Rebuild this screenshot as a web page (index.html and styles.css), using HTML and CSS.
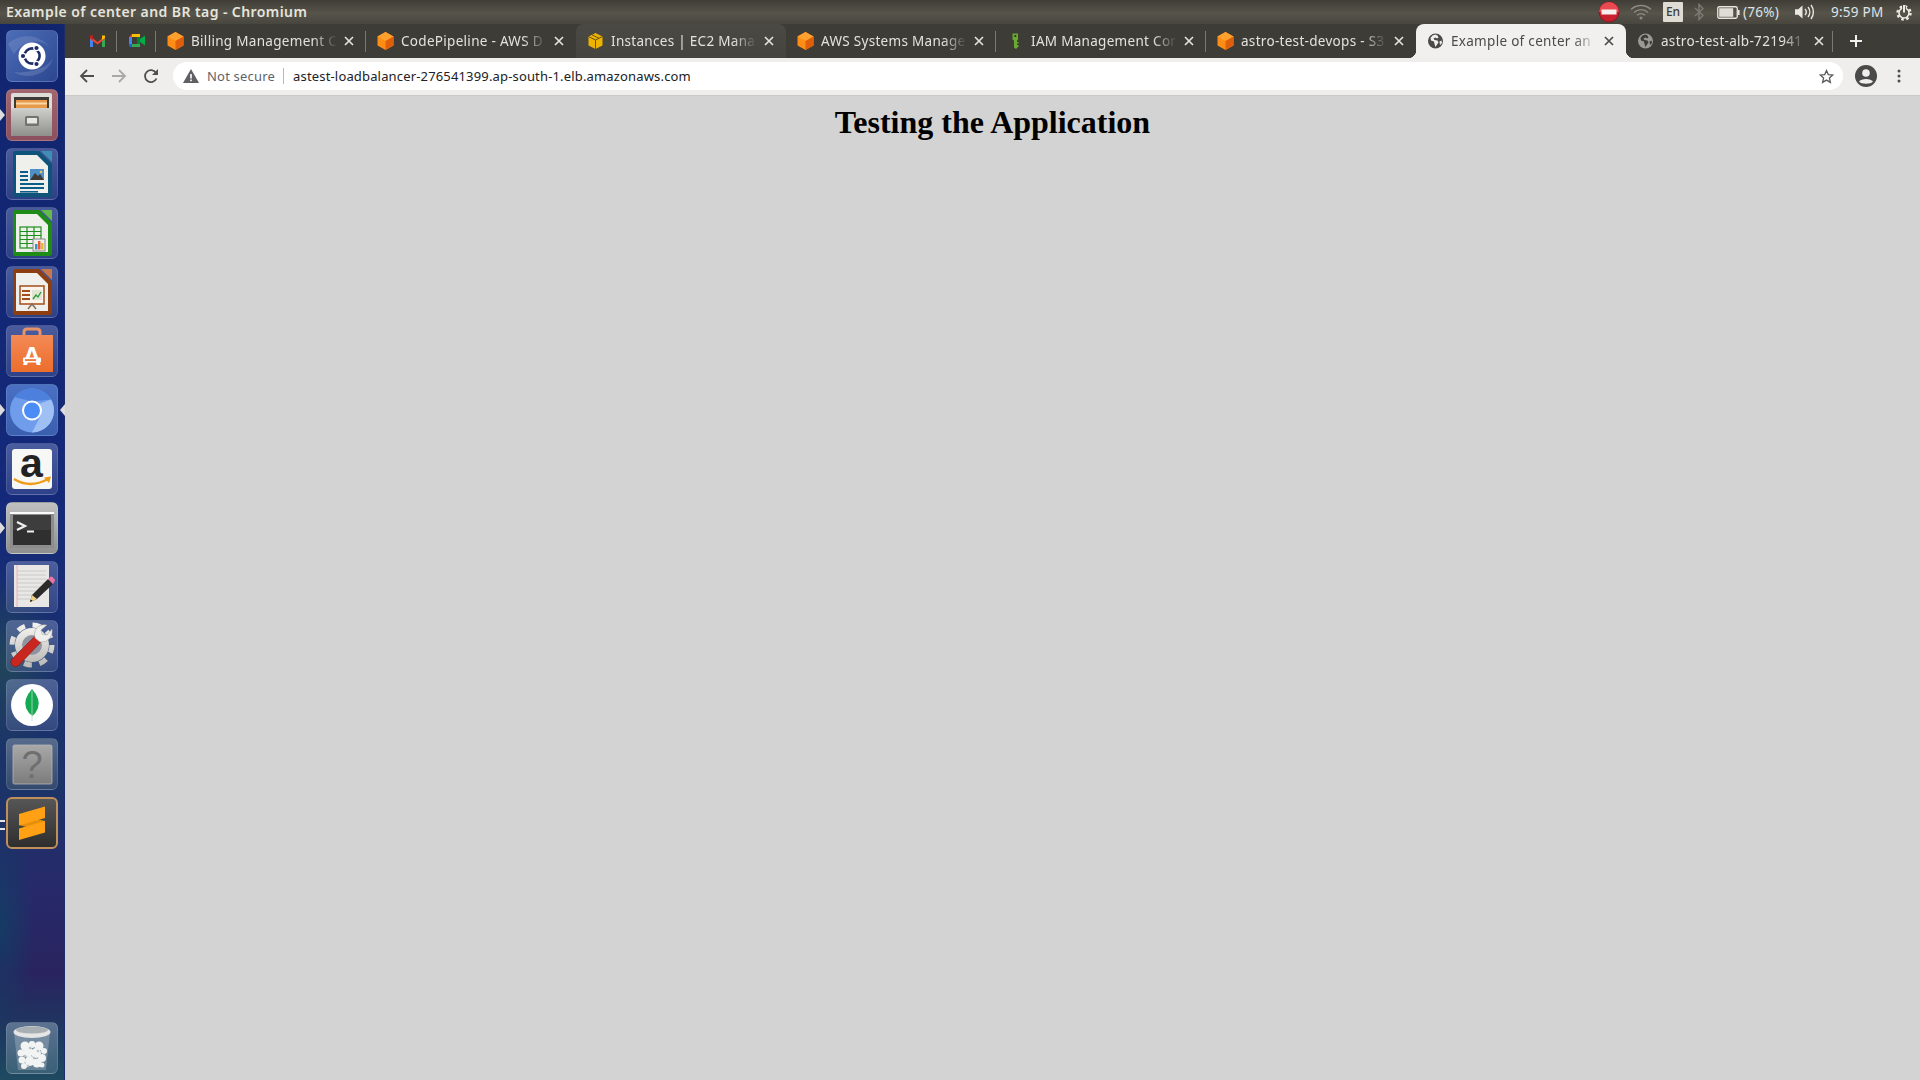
FILE: index.html
```html
<!DOCTYPE html>
<html lang="en">
<head>
<meta charset="utf-8">
<title>Example of center and BR tag - Chromium</title>
<link rel="stylesheet" href="styles.css">
</head>
<body>
<svg class="defs" width="0" height="0" aria-hidden="true">
  <symbol id="cube" viewBox="0 0 16 18">
    <path d="M8 0 16 4.500V13.500L8 18 0 13.500V4.500Z" fill="#ff8c14"/>
    <path d="M8 0 16 4.500 8 9 0 4.500Z" fill="#ffa02e"/>
    <path d="M8 9 16 4.500V13.500L8 18Z" fill="#dd5f0c"/>
  </symbol>
  <symbol id="globe" viewBox="0 0 16 16">
    <circle cx="8" cy="8" r="7.500" fill="currentColor"/>
    <path d="M8 1.500 5 2.500 3 5l.5 2.500L6.500 8.500 7 11l1 3 1.500-2.500 1.500-2-1-2L7 7 6 5.500 8 4.500 9.500 5.500 11 4.500 10 2.500Z" fill="var(--globe-land)"/>
    <path d="M12 8.500 14 7.500 14.500 10 12.500 12Z" fill="var(--globe-land)"/>
  </symbol>
  <symbol id="close" viewBox="0 0 10 10">
    <path d="M1 1 9 9M9 1 1 9" fill="none" stroke="currentColor" stroke-width="1.700"/>
  </symbol>
  <linearGradient id="cab" x1="0" y1="0" x2="0" y2="1"><stop offset="0" stop-color="#cfcfcb"/><stop offset="1" stop-color="#8f8f8b"/></linearGradient>
  <linearGradient id="bag" x1="0" y1="0" x2="0" y2="1"><stop offset="0" stop-color="#f48a56"/><stop offset="1" stop-color="#ec6d2c"/></linearGradient>
  <linearGradient id="unk" x1="0" y1="0" x2="0" y2="1"><stop offset="0" stop-color="#a8a8a8"/><stop offset="1" stop-color="#7c7c7c"/></linearGradient>
  <linearGradient id="gear" x1="0" y1="0" x2="0" y2="1"><stop offset="0" stop-color="#f0efec"/><stop offset="1" stop-color="#bdbcb8"/></linearGradient>
</svg>

<header class="topbar">
  <div class="win-title">Example of center and BR tag - Chromium</div>
  <div class="indicators">
    <svg class="ind-stop" width="22" height="22" viewBox="0 0 22 22"><circle cx="11" cy="11" r="10" fill="#c9202f" stroke="#8e1520"/><path d="M11 1a10 10 0 0 1 10 10H1A10 10 0 0 1 11 1Z" fill="#e84a4f"/><rect x="3.500" y="8.500" width="15" height="5" fill="#f5f0ee"/></svg>
    <svg class="ind-wifi" width="22" height="16" viewBox="0 0 22 16"><g fill="none" stroke="#8b8a82" stroke-width="1.400"><path d="M1 5.500a14.500 14.500 0 0 1 20 0"/><path d="M4 8.500a10 10 0 0 1 14 0"/><path d="M7 11.300a6 6 0 0 1 8 0"/></g><circle cx="11" cy="14" r="1.500" fill="#8b8a82"/></svg>
    <span class="ind-en">En</span>
    <svg class="ind-bt" width="10" height="18" viewBox="0 0 10 18"><path d="M1 5 9 12.500 5 16.500V1.500L9 5.500 1 13" fill="none" stroke="#7d7c74" stroke-width="1.400"/></svg>
    <svg class="ind-bat" width="23" height="13" viewBox="0 0 23 13"><rect x=".75" y=".75" width="19.500" height="11.500" rx="1.500" fill="none" stroke="#e8e6df" stroke-width="1.300"/><rect x="2.200" y="2.200" width="14" height="8.600" fill="#dfddd5"/><rect x="21" y="4" width="1.600" height="5" fill="#e8e6df"/></svg>
    <span class="ind-text ind-pct">(76%)</span>
    <svg class="ind-vol" width="21" height="16" viewBox="0 0 21 16"><path d="M0 5.200H3.200L7.500 1.500V14.500L3.200 10.800H0Z" fill="#e8e6df"/><g fill="none" stroke="#e8e6df" stroke-width="1.400"><path d="M10 5a4.500 4.500 0 0 1 0 6"/><path d="M13 3a8 8 0 0 1 0 10"/><path d="M16 1a11.500 11.500 0 0 1 0 14"/></g></svg>
    <span class="ind-text ind-time">9:59 PM</span>
    <svg class="ind-power" width="16" height="17" viewBox="0 0 16 17"><circle cx="8" cy="9" r="6.500" fill="none" stroke="#eeece5" stroke-width="2.400" stroke-dasharray="2.500 2.600"/><circle cx="8" cy="9" r="5" fill="none" stroke="#eeece5" stroke-width="1.600"/><rect x="6.200" y="2" width="3.600" height="5" fill="#4c4a41"/><rect x="7" y="1" width="2" height="7.500" fill="#eeece5"/></svg>
  </div>
</header>

<div class="desktop">
  <nav class="launcher">
    <div class="tile tile-ubuntu">
      <svg viewBox="0 0 52 52"><path d="M2 14C14 2 36 4 46 20 38 8 18 8 8 24Z" fill="#fff" opacity=".12"/><path d="M8 42C20 50 42 46 47 28 42 38 22 44 8 42Z" fill="#fff" opacity=".14"/><circle cx="26" cy="26" r="13.500" fill="#fff"/><circle cx="26" cy="26" r="7.600" fill="none" stroke="#1e2d68" stroke-width="2.600"/><g fill="#1e2d68" stroke="#fff" stroke-width="1.200"><circle cx="17" cy="26" r="2.700"/><circle cx="30.500" cy="18" r="2.700"/><circle cx="30.500" cy="34" r="2.700"/></g></svg>
    </div>
    <div class="tile tile-files has-pip">
      <svg viewBox="0 0 52 52"><rect x="5" y="4" width="41" height="43" rx="2" fill="#dcdcd8"/><rect x="8" y="8" width="35" height="12" fill="#3d3a36"/><path d="M10 11H41V21H10Z" fill="#e89a4a"/><path d="M10 13.500H41V15.500H10Z" fill="#f7d9a8"/><rect x="5" y="19" width="41" height="28" rx="2" fill="url(#cab)"/><rect x="19" y="27" width="14" height="10" rx="1.500" fill="#737370"/><rect x="21" y="29" width="10" height="5.500" fill="#e6e6e2"/></svg>
    </div>
    <div class="tile tile-blue">
      <svg viewBox="0 0 52 52"><path d="M7 5Q7 3 9 3H33L46 16V46Q46 49 43 49H9Q7 49 7 46Z" fill="#0e5379"/><path d="M35 3H46V14Z" fill="#3f8eb5"/><path d="M10 7H31L42 18V45H10Z" fill="#efefec"/><g fill="#0e5c8a"><rect x="14" y="23" width="8" height="2"/><rect x="14" y="27" width="8" height="2"/><rect x="14" y="31" width="8" height="2"/><rect x="14" y="35" width="24" height="2"/><rect x="14" y="39" width="24" height="2"/><rect x="14" y="43" width="18" height="1.600"/></g><rect x="24" y="21" width="14" height="11" fill="#4d8fc7"/><path d="M24 32 29 25l3 3 2-2 4 6Z" fill="#3e3a36"/><circle cx="35" cy="24" r="1.300" fill="#f2c24b"/></svg>
    </div>
    <div class="tile tile-blue">
      <svg viewBox="0 0 52 52"><path d="M7 5Q7 3 9 3H33L46 16V46Q46 49 43 49H9Q7 49 7 46Z" fill="#1f8c17"/><path d="M35 3H46V14Z" fill="#63bb4c"/><path d="M10 7H31L42 18V45H10Z" fill="#efefec"/><g fill="none" stroke="#1f8f1c" stroke-width="1.200"><rect x="14" y="20" width="21" height="21"/><path d="M14 24.500H35M14 28.500H35M14 32.500H35M14 36.500H35M21 20V41M28 20V41"/></g><rect x="27" y="32" width="12" height="12" fill="#eee" stroke="#888"/><rect x="29" y="37" width="2.500" height="5.500" fill="#3d8fd1"/><rect x="32" y="34" width="2.500" height="8.500" fill="#e8632c"/><rect x="35" y="36" width="2.500" height="6.500" fill="#e8b82c"/></svg>
    </div>
    <div class="tile tile-blue">
      <svg viewBox="0 0 52 52"><path d="M7 5Q7 3 9 3H33L46 16V46Q46 49 43 49H9Q7 49 7 46Z" fill="#8e3f12"/><path d="M35 3H46V14Z" fill="#c8774a"/><path d="M10 7H31L42 18V45H10Z" fill="#efefec"/><rect x="14" y="20" width="24" height="18" fill="#fbf4ec" stroke="#a34d1b" stroke-width="1.500"/><g fill="#a34d1b"><rect x="16" y="24" width="8" height="2"/><rect x="16" y="28" width="8" height="2"/><rect x="16" y="32" width="8" height="2"/></g><rect x="26" y="24" width="10" height="10" fill="#e0e5d4"/><path d="M27 33l3-4 2 2 3-5" fill="none" stroke="#2f9a35" stroke-width="1.300"/><path d="M22 43 26 38 30 43" fill="none" stroke="#8a6a4f" stroke-width="1.500"/></svg>
    </div>
    <div class="tile tile-blue">
      <svg viewBox="0 0 52 52"><path d="M18 12V7Q18 4 21 4H31Q34 4 34 7V12" fill="none" stroke="#e8926a" stroke-width="3"/><path d="M5 10H47V47H5Z" fill="url(#bag)"/><text x="26" y="40" class="bag-a">A</text><rect x="17" y="32.500" width="18" height="5" rx="1" fill="#fff"/><rect x="19" y="34.200" width="11" height="1.700" fill="#ec6d2c"/></svg>
    </div>
    <div class="tile tile-chromium has-pip has-pip-right">
      <svg viewBox="0 0 52 52"><circle cx="26" cy="26.500" r="22" fill="#6f9dec"/><path d="M26 4.500A22 22 0 0 1 45 15.500L26 17.500 8 13A22 22 0 0 1 26 4.500Z" fill="#4c80dc"/><path d="M45 15.500A22 22 0 0 1 26 48.500L35 31 33 20Z" fill="#9fc0f4"/><circle cx="26" cy="26.500" r="10" fill="#fff"/><circle cx="26" cy="26.500" r="8" fill="#4a8df6"/></svg>
    </div>
    <div class="tile tile-blue">
      <svg viewBox="0 0 52 52"><rect x="6" y="6" width="40" height="40" rx="3" fill="#f7f7f5"/><text x="25.500" y="34" class="amz-a">a</text><path d="M8 36Q24 46 42 36" fill="none" stroke="#f09c1a" stroke-width="2.400"/><path d="M38 34.500 45 33.500 43 40Z" fill="#f09c1a"/></svg>
    </div>
    <div class="tile tile-terminal has-pip">
      <svg viewBox="0 0 52 52"><rect x="4" y="10" width="44" height="36" rx="1" fill="#8c8c8c"/><rect x="4" y="10" width="44" height="2" fill="#fafafa"/><rect x="7" y="13" width="38" height="30" fill="#2f2f2f"/><rect x="7" y="13" width="38" height="15" fill="#3d3d3d"/><path d="M11 20 19 24 11 28" fill="none" stroke="#f0f0f0" stroke-width="2.200"/><rect x="21" y="28.500" width="7" height="2" fill="#f0f0f0"/></svg>
    </div>
    <div class="tile tile-blue">
      <svg viewBox="0 0 52 52"><rect x="8" y="4" width="35" height="42" fill="#e9e6e6"/><g stroke="#c4c1c1" stroke-width=".8"><path d="M11 10H40M11 14H40M11 18H40M11 22H40M11 26H40M11 30H34M11 34H28M11 38H24"/></g><path d="M11 4V46" stroke="#e4a8a8" stroke-width=".8"/><path d="M24 41 26 34 42 18 47 23 31 38Z" fill="#2a2a2a"/><path d="M42 18 44 16Q45.500 15 47 16.500L48.500 18Q49.500 19.500 48.500 20.500L47 23Z" fill="#e874a8"/><path d="M24 41 26 34 31 38Z" fill="#efcf80"/><path d="M24 41 24.700 38.500 26.500 39.800Z" fill="#111"/></svg>
    </div>
    <div class="tile tile-blue">
      <svg viewBox="0 0 52 52"><circle cx="26" cy="25" r="20" fill="none" stroke="url(#gear)" stroke-width="5" stroke-dasharray="8 7.700"/><circle cx="26" cy="25" r="17" fill="url(#gear)"/><circle cx="26" cy="25" r="10" fill="#8f93a0"/><path d="M6.500 45.500Q3 42 6.500 38.500L29 16 35 22 12.500 45.500Q9.500 48 6.500 45.500Z" fill="#c8261f" stroke="#7e1713" stroke-width=".6"/><path d="M29 18Q27 10 33 6 37 4 41 5L35 10 36 14 41 15 46 9Q47 14 44 18 40 23 34 22Z" fill="#eeeeec" stroke="#999" stroke-width=".5"/></svg>
    </div>
    <div class="tile tile-blue">
      <svg viewBox="0 0 52 52"><circle cx="26" cy="26" r="21" fill="#fff"/><path d="M26 10Q35 20 32 29 30 34 26.500 37 22 34 20 29 17 20 26 10Z" fill="#13aa52"/><path d="M26 12V42" stroke="#c2d9c8" stroke-width=".8"/></svg>
    </div>
    <div class="tile tile-slate">
      <svg viewBox="0 0 52 52"><rect x="7" y="7" width="39" height="39" rx="1.500" fill="url(#unk)" stroke="#b5b5b5" stroke-width=".8"/><text x="26" y="40" class="q-mark">?</text></svg>
    </div>
    <div class="tile tile-sublime has-pip-double">
      <svg viewBox="0 0 52 52"><path d="M13 18 39 24V35L13 28Z" fill="#e68f0a"/><path d="M13 17 39 9.500V21L13 28.500Z" fill="#ffa015"/><path d="M13 31.500 39 24V35.500L13 43Z" fill="#ffa015"/></svg>
    </div>
    <div class="tile tile-trash">
      <svg viewBox="0 0 52 52"><path d="M8 10 12 48H40L44 10Z" fill="#fff" opacity=".22"/><g fill="#f2f3f3"><circle cx="19" cy="24" r="4.500"/><circle cx="26" cy="22.500" r="3.500"/><circle cx="33" cy="24" r="4.500"/><circle cx="38" cy="29" r="3"/><circle cx="15" cy="31" r="3.500"/><circle cx="22" cy="30" r="5"/><circle cx="30" cy="31" r="5"/><circle cx="36" cy="36" r="4"/><circle cx="16" cy="38" r="3.500"/><circle cx="24" cy="39" r="5"/><circle cx="31" cy="41" r="4.500"/><circle cx="18" cy="44" r="3"/><circle cx="36" cy="43" r="2.500"/></g><g fill="#b9c2c7"><circle cx="24" cy="26" r="1.300"/><circle cx="32" cy="29" r="1.300"/><circle cx="19" cy="34" r="1.200"/><circle cx="28" cy="36" r="1.300"/><circle cx="22" cy="44" r="1.200"/></g><ellipse cx="26" cy="10" rx="18.500" ry="6" fill="#e4e5e4"/><ellipse cx="26" cy="8" rx="16" ry="3.500" fill="#a8afb2"/></svg>
    </div>
  </nav>

  <main class="browser">
    <div class="tabstrip">
      <div class="pin sep">
        <svg width="15" height="12" viewBox="0 0 15 12"><path d="M0 3V12H3V5Z" fill="#4285f4"/><path d="M12 5V12H15V3Z" fill="#34a853"/><path d="M0 1 7.500 7 15 1V4L7.500 9.500 0 4Z" fill="#ea4335"/><path d="M12 0.500 15 0.500V3L12 5Z" fill="#fbbc04"/><path d="M0 .5 3 .5V5L0 3Z" fill="#c5221f"/></svg>
      </div>
      <div class="pin sep">
        <svg width="16" height="13" viewBox="0 0 16 13"><path d="M3 0H11V3H3Z" fill="#fbbc04"/><path d="M0 3 3 0V3Z" fill="#ea4335"/><path d="M0 3H3V10H0Z" fill="#4285f4"/><path d="M0 10H3V13H1.500Q0 13 0 11.500Z" fill="#1967d2"/><path d="M3 10H11V13H3Z" fill="#34a853"/><path d="M8 3H11V10H8Z" fill="#00832d"/><path d="M11 5 16 1.500V11.500L11 8Z" fill="#00ac47"/></svg>
      </div>

      <div class="tab sep"><svg class="fav"><use href="#cube"/></svg><span class="tab-title">Billing Management C</span><svg class="tab-x"><use href="#close"/></svg></div>
      <div class="tab"><svg class="fav"><use href="#cube"/></svg><span class="tab-title">CodePipeline - AWS D</span><svg class="tab-x"><use href="#close"/></svg></div>
      <div class="tab tab-hover">
        <svg class="fav" viewBox="0 0 16 18"><path d="M8 1 15 4.500V13.500L8 17 1 13.500V4.500Z" fill="#eeb200"/><path d="M1 4.500 8 8 15 4.500M8 8V17M4.500 2.800 11.500 6.300" fill="none" stroke="#5b4a10" stroke-width=".9"/></svg>
        <span class="tab-title">Instances | EC2 Manag</span><svg class="tab-x"><use href="#close"/></svg>
      </div>
      <div class="tab sep"><svg class="fav"><use href="#cube"/></svg><span class="tab-title">AWS Systems Manage</span><svg class="tab-x"><use href="#close"/></svg></div>
      <div class="tab sep">
        <svg class="fav" viewBox="0 0 16 18"><path d="M5 1.500H10.500V7.500L9.500 8.500V10H11V11.500H9.500V13H11V14.500L8.500 17 6.500 15.500V8.500L5 7.500Z" fill="#6aa92f"/><circle cx="7.800" cy="4" r="1.100" fill="#24320f"/></svg>
        <span class="tab-title">IAM Management Cor</span><svg class="tab-x"><use href="#close"/></svg>
      </div>
      <div class="tab"><svg class="fav"><use href="#cube"/></svg><span class="tab-title">astro-test-devops - S3</span><svg class="tab-x"><use href="#close"/></svg></div>
      <div class="tab tab-active"><svg class="fav fav-globe"><use href="#globe"/></svg><span class="tab-title">Example of center an</span><svg class="tab-x"><use href="#close"/></svg></div>
      <div class="tab tab-last sep"><svg class="fav fav-globe-dim"><use href="#globe"/></svg><span class="tab-title">astro-test-alb-721941</span><svg class="tab-x"><use href="#close"/></svg></div>
      <svg class="new-tab" width="14" height="14" viewBox="0 0 14 14"><path d="M7 1V13M1 7H13" stroke="#f2f1ef" stroke-width="2" fill="none"/></svg>
    </div>

    <div class="toolbar">
      <svg class="tool tool-back" width="16" height="16" viewBox="0 0 16 16"><path d="M15 8H2M8 2 2 8 8 14" fill="none" stroke="#4e4e4e" stroke-width="1.800"/></svg>
      <svg class="tool tool-fwd" width="16" height="16" viewBox="0 0 16 16"><path d="M1 8H14M8 2 14 8 8 14" fill="none" stroke="#a8a8a8" stroke-width="1.800"/></svg>
      <svg class="tool tool-reload" width="16" height="16" viewBox="0 0 16 16"><path d="M13.500 10.500A6 6 0 1 1 13 4.700" fill="none" stroke="#4e4e4e" stroke-width="1.800"/><path d="M15 1V7H9Z" fill="#4e4e4e"/></svg>
      <div class="omnibox">
        <svg class="warn" width="16" height="14" viewBox="0 0 16 14"><path d="M8 0 16 14H0Z" fill="#5f6063"/><rect x="7.200" y="5" width="1.600" height="4.500" fill="#fff"/><rect x="7.200" y="10.500" width="1.600" height="1.700" fill="#fff"/></svg>
        <span class="not-secure">Not secure</span>
        <span class="omni-sep"></span>
        <span class="url">astest-loadbalancer-276541399.ap-south-1.elb.amazonaws.com</span>
        <svg class="star" width="15" height="15" viewBox="0 0 15 15"><path d="M7.500 1.500 9.300 5.600 13.800 6 10.400 9 11.400 13.400 7.500 11.100 3.600 13.400 4.600 9 1.200 6 5.700 5.600Z" fill="none" stroke="#5a5a5a" stroke-width="1.300"/></svg>
      </div>
      <svg class="avatar" width="22" height="22" viewBox="0 0 22 22"><circle cx="11" cy="11" r="11" fill="#4a4a4a"/><circle cx="11" cy="8" r="3.800" fill="#f0efee"/><path d="M4 16.500C6 13 16 13 18 16.500 16 19.500 6 19.500 4 16.500Z" fill="#f0efee"/></svg>
      <svg class="dots" width="4" height="14" viewBox="0 0 4 14"><g fill="#4e4e4e"><circle cx="2" cy="2" r="1.500"/><circle cx="2" cy="7" r="1.500"/><circle cx="2" cy="12" r="1.500"/></g></svg>
    </div>

    <section class="page">
      <h1 class="page-title">Testing the Application</h1>
    </section>
  </main>
</div>
</body>
</html>
```

FILE: styles.css
```css
* { box-sizing: border-box; }
html, body { margin: 0; height: 100%; }
body {
  width: 1920px;
  height: 1080px;
  overflow: hidden;
  display: flex;
  flex-direction: column;
  font-family: "Noto Sans", "Open Sans", sans-serif;
  background: #d3d3d3;
}
.defs { position: absolute; }

/* Top panel */
.topbar {
  height: 24px;
  flex: none;
  display: flex;
  align-items: center;
  justify-content: space-between;
  background: linear-gradient(#3f3d36, #57544a 55%, #47463e);
}
.win-title {
  padding: 0 0 2px 6px;
  font-size: 14px;
  font-weight: 600;
  letter-spacing: .42px;
  color: #e6e4dc;
  white-space: nowrap;
}
.indicators {
  display: flex;
  align-items: center;
  height: 24px;
  width: 322px;
  color: #e8e6df;
}
.ind-wifi { margin-left: 10px; }
.ind-en {
  margin-left: 11px;
  width: 20px;
  height: 20px;
  background: #dfdcd4;
  color: #3d3c36;
  border-radius: 1px;
  font-size: 12px;
  font-weight: 500;
  line-height: 20px;
  text-align: center;
}
.ind-bt { margin-left: 11px; }
.ind-bat { margin-left: 13px; }
.ind-text { font-size: 13.500px; letter-spacing: .25px; color: #dfe3e8; white-space: nowrap; }
.ind-pct { margin-left: 3px; width: 42px; }
.ind-vol { margin-left: 10px; }
.ind-time { margin-left: 15px; width: 57px; }
.ind-power { margin-left: 8px; }

.desktop { flex: 1; display: flex; min-height: 0; }

/* Launcher */
.launcher {
  width: 65px;
  flex: none;
  display: flex;
  flex-direction: column;
  gap: 7px;
  padding: 6px 0 6px 6px;
  border-right: 1px solid #1d2d6a;
  background:
    radial-gradient(ellipse 55px 90px at 5px 640px, rgba(40, 90, 70, .5), transparent),
    radial-gradient(ellipse 35px 110px at 0 900px, rgba(10, 70, 100, .65), transparent),
    linear-gradient(#11256f 0, #14297a 45%, #1a3070 60%, #1b3468 72%, #27296a 82%, #29245f 90%, #1c3a60 96%, #1e4a60 100%);
}
.tile {
  position: relative;
  width: 52px;
  height: 52px;
  flex: none;
  border-radius: 6px;
  border: 1px solid rgba(255, 255, 255, .12);
  background: linear-gradient(rgba(150, 165, 210, .42), rgba(110, 125, 175, .3));
}
.tile svg { position: absolute; left: -1px; top: -1px; width: 52px; height: 52px; overflow: visible; }
.tile-ubuntu { background: linear-gradient(135deg, #4d6db8, #2c4790); }
.tile-files { background: linear-gradient(#a2666f, #8c4f5e); }
.tile-chromium { background: linear-gradient(#4a70c4, #3a5fae); }
.tile-terminal { background: linear-gradient(#c0c0c0, #8f8f8f); }
.tile-slate { background: linear-gradient(#566a8c, #33496e); }
.tile-sublime { background: linear-gradient(#565656, #2e2e2e); border: 2px solid #c0905c; }
.tile-sublime svg { left: -2px; top: -2px; }
.tile-trash { margin-top: auto; background: linear-gradient(rgba(170, 190, 205, .45), rgba(120, 150, 165, .32)); }

.has-pip::before,
.has-pip-right::after {
  content: "";
  position: absolute;
  top: 19px;
  border: 6px solid transparent;
}
.has-pip::before { left: -7px; border-left: 5px solid #dcdcdc; border-right-width: 0; }
.has-pip-right::after { right: -8px; border-right: 5px solid #dcdcdc; border-left-width: 0; }
.has-pip-double::before {
  content: "";
  position: absolute;
  left: -8px;
  top: 21px;
  width: 5px;
  height: 6px;
  border-top: 2px solid #e6e6e6;
  border-bottom: 2px solid #e6e6e6;
}
.bag-a { font: 700 26px "Liberation Sans", sans-serif; fill: #fff; text-anchor: middle; }
.amz-a { font: 700 41px "Liberation Sans", sans-serif; fill: #222; text-anchor: middle; }
.q-mark { font: 400 38px "Liberation Sans", sans-serif; fill: #6f6f6f; text-anchor: middle; }

/* Browser */
.browser { flex: 1; min-width: 0; display: flex; flex-direction: column; }

.tabstrip {
  height: 34px;
  flex: none;
  display: flex;
  align-items: center;
  padding-left: 13px;
  background: #3d3c36;
}
.pin {
  position: relative;
  width: 39px;
  height: 34px;
  flex: none;
  display: flex;
  align-items: center;
  justify-content: center;
  padding-bottom: 1px;
}
.tab {
  position: relative;
  width: 210px;
  height: 34px;
  flex: none;
  display: flex;
  align-items: center;
  padding-left: 10.500px;
  color: #e3e2df;
  --globe-land: #3d3c36;
}
.sep::after {
  content: "";
  position: absolute;
  right: 0;
  top: 7px;
  width: 1px;
  height: 21px;
  background: #7a7973;
}
.tab-hover {
  background: linear-gradient(#4a4943, #45443e);
  border-radius: 8px 8px 0 0;
}
.tab-active {
  background: #f1f0ee;
  color: #4b4b4b;
  border-radius: 8px 8px 0 0;
  --globe-land: #f1f0ee;
}
.tab-active::before,
.tab-active::after {
  content: "";
  position: absolute;
  bottom: 0;
  width: 8px;
  height: 8px;
}
.tab-active::before {
  left: -8px;
  background: radial-gradient(circle at 0 0, transparent 8px, #f1f0ee 8.500px);
}
.tab-active::after {
  right: -8px;
  background: radial-gradient(circle at 100% 0, transparent 8px, #f1f0ee 8.500px);
}
.tab-last { width: 207px; }
.fav { width: 17px; height: 18px; flex: none; }
.fav-globe { color: #4a4a4a; height: 16px; }
.fav-globe-dim { color: #9a9a97; height: 16px; }
.tab-title {
  flex: none;
  width: 153px;
  margin-left: 7.500px;
  font-size: 13.500px;
  letter-spacing: .3px;
  white-space: nowrap;
  overflow: hidden;
  -webkit-mask-image: linear-gradient(90deg, #000 122px, transparent 146px);
  mask-image: linear-gradient(90deg, #000 122px, transparent 146px);
}
.tab-x { width: 10px; height: 10px; flex: none; }
.new-tab { margin-left: 16px; flex: none; }

.toolbar {
  height: 38px;
  flex: none;
  display: flex;
  align-items: center;
  padding-bottom: 1px;
  background: #efeeec;
  border-bottom: 1px solid #c9c9c9;
}
.tool { flex: none; }
.tool-back { margin-left: 14px; }
.tool-fwd { margin-left: 16px; }
.tool-reload { margin-left: 16px; }
.omnibox {
  margin-left: 14px;
  width: 1670px;
  height: 28px;
  flex: none;
  display: flex;
  align-items: center;
  background: #fff;
  border-radius: 14px;
  padding: 0 9px 0 10px;
}
.warn { flex: none; }
.not-secure { margin-left: 8px; font-size: 13px; letter-spacing: .2px; color: #5f6368; }
.omni-sep { width: 1px; height: 16px; margin: 0 9px 0 8px; background: #b8b8b8; }
.url { font-size: 13px; letter-spacing: .16px; color: #202124; white-space: nowrap; }
.star { margin-left: auto; flex: none; }
.avatar { margin-left: 12px; flex: none; }
.dots { margin-left: 20px; flex: none; }

.page {
  flex: 1;
  padding: 8px;
  background: #d3d3d3;
  text-align: center;
}
.page-title {
  margin: 0;
  font-family: "Liberation Serif", "Times New Roman", serif;
  font-size: 32px;
  font-weight: 700;
  color: #000;
}
```
